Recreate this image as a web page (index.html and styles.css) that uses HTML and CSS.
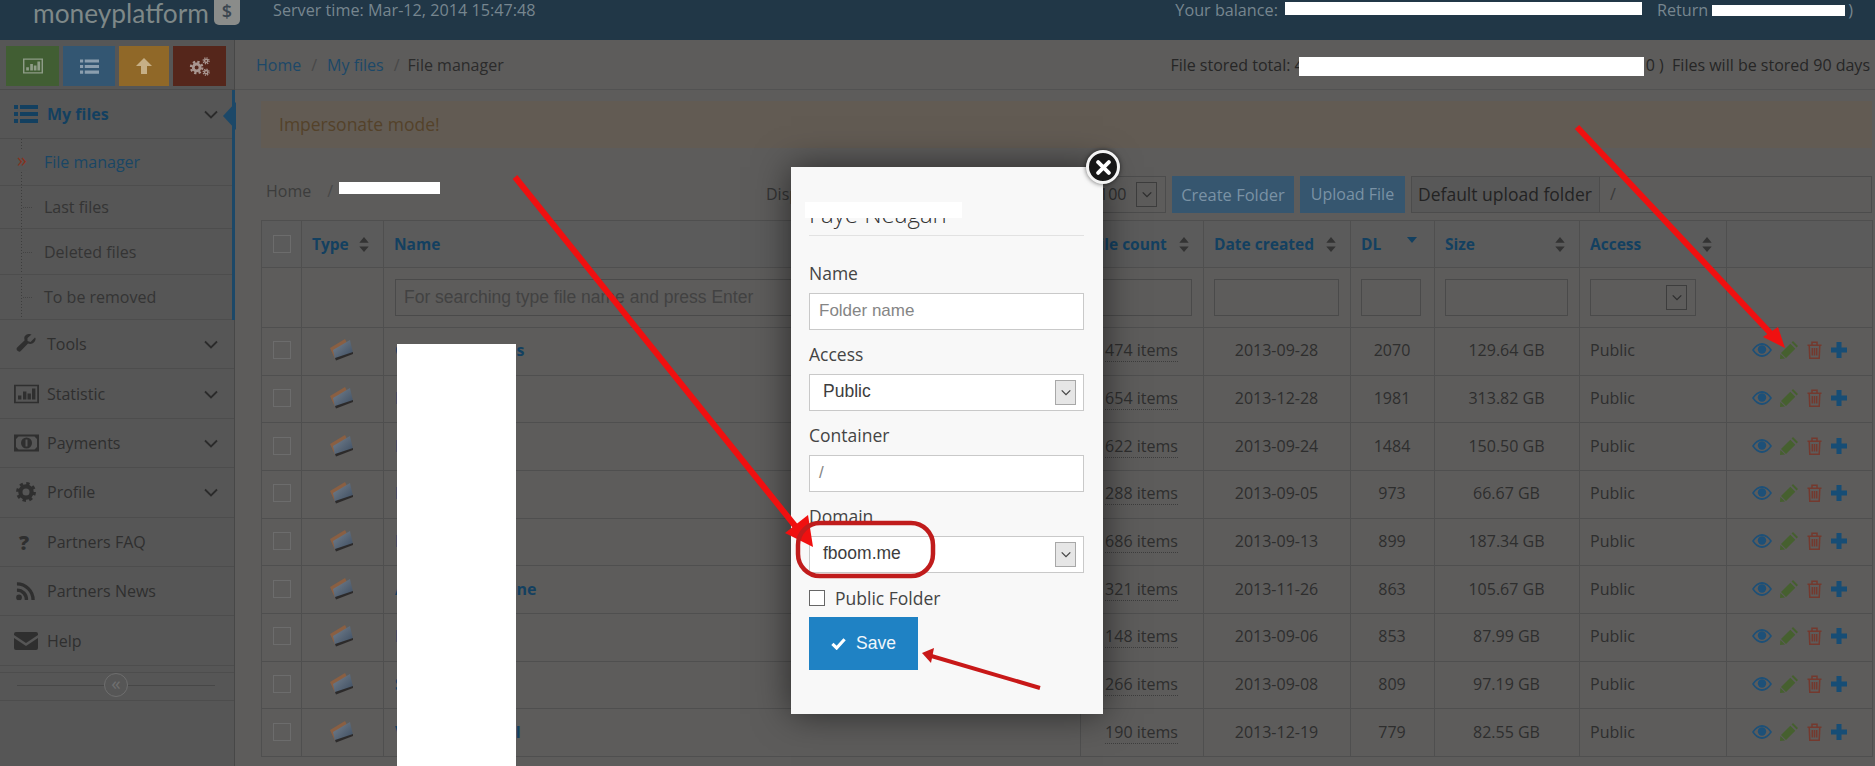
FILE: index.html
```html
<!DOCTYPE html>
<html lang="en">
<head>
<meta charset="utf-8">
<title>File manager</title>
<link rel="stylesheet" href="styles.css">
</head>
<body>
<svg class="sprite" width="0" height="0" aria-hidden="true">
  <defs>
    <linearGradient id="fld" x1="0" y1="0" x2="1" y2="1"><stop offset="0" stop-color="#76828f"/><stop offset="1" stop-color="#3c4c60"/></linearGradient>
    <symbol id="i-list" viewBox="0 0 24 18"><path d="M0 0h4v4H0zM6 0h18v4H6zM0 7h4v4H0zM6 7h18v4H6zM0 14h4v4H0zM6 14h18v4H6z"/></symbol>
    <symbol id="i-bars" viewBox="0 0 25 19"><path fill-rule="evenodd" d="M0 0h25v19H0zM1.800 1.800v15.400h21.400V1.800z"/><path d="M4 11h3.400v4H4zM9 7h3.400v8H9zM13.500 9h3.400v6h-3.400zM18 4h3.400v11H18z"/></symbol>
    <symbol id="i-chev" viewBox="0 0 14 9"><path d="M1 1.500l6 6 6-6" fill="none" stroke="currentColor" stroke-width="1.800"/></symbol>
    <symbol id="i-wrench" viewBox="0 0 20 20"><path d="M19.600 4.600c0 3-2.400 5.400-5.400 5.400-.8 0-1.500-.2-2.200-.5L5 16.700a2.400 2.400 0 1 1-3.600-3.400l7.300-7.100c-.3-.7-.4-1.400-.4-2.200C8.300 1.500 11 0 13.500 0c.7 0 1.400.2 2 .5L11.500 4v3l3 1 4.500-4.500z"/></symbol>
    <symbol id="i-money" viewBox="0 0 25 17"><path fill-rule="evenodd" d="M0 0h25v17H0zM4.500 2L2 4.500v8L4.500 15h16l2.500-2.500v-8L20.500 2z"/><circle cx="12.500" cy="8.500" r="5.500"/><path d="M11.500 5h2v7h-2z" fill="#565656"/></symbol>
    <symbol id="i-gear" viewBox="0 0 22 22"><circle cx="11" cy="11" r="6.200" fill="none" stroke="currentColor" stroke-width="4.600"/><circle cx="11" cy="11" r="9.200" fill="none" stroke="currentColor" stroke-width="3.400" stroke-dasharray="3.600 3.630"/></symbol>
    <symbol id="i-rss" viewBox="0 0 20 20"><circle cx="3.200" cy="16.800" r="3"/><path d="M1 9a10 10 0 0 1 10 10.500M1 2.500a17 17 0 0 1 17 17" fill="none" stroke="currentColor" stroke-width="3.500"/></symbol>
    <symbol id="i-mail" viewBox="0 0 24 18"><path d="M0 2a2 2 0 0 1 2-2h20a2 2 0 0 1 2 2v1L12 11 0 3zM0 6l12 8 12-8v10a2 2 0 0 1-2 2H2a2 2 0 0 1-2-2z"/></symbol>
    <symbol id="i-sort" viewBox="0 0 10 16"><path d="M5 0l5 6H0zM5 16l-5-6h10z"/></symbol>
    <symbol id="i-folder" viewBox="0 0 24 22"><path d="M0 9L15 0l2 4-13 9 1 7z" fill="#8a5f42"/><path d="M3 11L20 1l3 13L5 20z" fill="url(#fld)"/><path d="M5 19l18-6v2L6 21.500z" fill="#2c2a2a"/></symbol>
    <symbol id="i-eye" viewBox="0 0 20 14"><path fill-rule="evenodd" d="M0 7C3 2.500 6.500 0 10 0s7 2.500 10 7c-3 4.500-6.500 7-10 7S3 11.500 0 7zM2 7c2.300 3.300 5 5 8 5s5.700-1.700 8-5c-2.300-3.300-5-5-8-5S4.300 3.700 2 7z"/><circle cx="10" cy="6.500" r="4.200"/></symbol>
    <symbol id="i-pencil" viewBox="0 0 18 18"><path d="M10.300 2.700l5 5L6 17 1 12zM11.600 1.400L13 0l5 5-1.400 1.400zM.4 13L5 17.600 0 18z"/></symbol>
    <symbol id="i-trash" viewBox="0 0 15 18"><path d="M.5 4.200h14M5 4V1.200h5V4M2.200 4.200l.6 13h9.400l.6-13M5.300 7v7.500M7.500 7v7.500M9.700 7v7.500" fill="none" stroke="currentColor" stroke-width="1.500"/></symbol>
    <symbol id="i-plus" viewBox="0 0 16 16"><path d="M5.500 0h5v5.500H16v5h-5.500V16h-5v-5.500H0v-5h5.500z"/></symbol>
  </defs>
</svg>

<div class="page">
  <header class="topbar">
    <div class="logo"><span class="logo-text">moneyplatform</span><span class="logo-badge">$</span></div>
    <div class="server-time">Server time: Mar-12, 2014 15:47:48</div>
    <div class="balance">Your balance:<span class="redact redact-bal"></span><span class="return">Return</span><span class="redact redact-ret"></span>)</div>
  </header>

  <div class="body-row">
    <aside class="sidebar">
      <div class="shortcuts">
        <a class="sc sc-green"><svg class="sc-bars"><use href="#i-bars"/></svg></a>
        <a class="sc sc-blue"><svg class="sc-list"><use href="#i-list"/></svg></a>
        <a class="sc sc-orange"><svg class="sc-up" viewBox="0 0 16 16"><path d="M8 0l8 8h-5v8H5V8H0z"/></svg></a>
        <a class="sc sc-red"><svg class="sc-gears" viewBox="0 0 22 20"><g fill="none" stroke="currentColor"><circle cx="8" cy="11" r="3.600" stroke-width="3"/><circle cx="8" cy="11" r="6" stroke-width="2.400" stroke-dasharray="2.400 2.310"/><circle cx="18" cy="4" r="1.700" stroke-width="1.600"/><circle cx="18" cy="4" r="3.100" stroke-width="1.400" stroke-dasharray="1.300 1.130"/><circle cx="18" cy="16" r="1.700" stroke-width="1.600"/><circle cx="18" cy="16" r="3.100" stroke-width="1.400" stroke-dasharray="1.300 1.130"/></g></svg></a>
      </div>
      <div class="nav-open">
        <div class="nav-item nav-active">
          <svg class="nav-ic ic-list"><use href="#i-list"/></svg><span>My files</span>
          <svg class="chev"><use href="#i-chev"/></svg>
          <i class="active-tip"></i>
        </div>
        <ul class="subnav">
          <li class="current"><b class="mark">»</b>File manager</li>
          <li><i class="dash"></i>Last files</li>
          <li><i class="dash"></i>Deleted files</li>
          <li><i class="dash"></i>To be removed</li>
        </ul>
      </div>
      <div class="nav-item"><svg class="nav-ic ic-wrench"><use href="#i-wrench"/></svg><span>Tools</span><svg class="chev"><use href="#i-chev"/></svg></div>
      <div class="nav-item"><svg class="nav-ic ic-bars"><use href="#i-bars"/></svg><span>Statistic</span><svg class="chev"><use href="#i-chev"/></svg></div>
      <div class="nav-item"><svg class="nav-ic ic-bars"><use href="#i-money"/></svg><span>Payments</span><svg class="chev"><use href="#i-chev"/></svg></div>
      <div class="nav-item"><svg class="nav-ic ic-gear"><use href="#i-gear"/></svg><span>Profile</span><svg class="chev"><use href="#i-chev"/></svg></div>
      <div class="nav-item"><b class="nav-ic ic-q">?</b><span>Partners FAQ</span></div>
      <div class="nav-item"><svg class="nav-ic ic-rss"><use href="#i-rss"/></svg><span>Partners News</span></div>
      <div class="nav-item"><svg class="nav-ic ic-mail"><use href="#i-mail"/></svg><span>Help</span></div>
      <div class="collapse"><span class="collapse-btn">«</span></div>
    </aside>

    <main class="main">
      <div class="crumbbar">
        <div class="crumbs"><a>Home</a><i>/</i><a>My files</a><i class="last-sep">/</i><span>File manager</span></div>
        <div class="stored">File stored total: 4<span class="redact redact-store"></span>0 )&nbsp; Files will be stored 90 days</div>
      </div>
      <div class="content">
        <div class="alert">Impersonate mode!</div>
        <div class="toolbar">
          <div class="path"><span>Home</span><i>/</i><span class="redact redact-path"></span></div>
          <div class="display-label">Display files per page</div>
          <div class="fake-select sel-page"><span>100</span><i class="sel-arrow"><svg class="chev-sm"><use href="#i-chev"/></svg></i></div>
          <a class="tbtn tbtn-create">Create Folder</a>
          <a class="tbtn tbtn-upload">Upload File</a>
          <div class="upload-group"><span class="ug-label">Default upload folder</span><span class="ug-value">/</span></div>
        </div>
        <table class="files">
          <colgroup><col class="c1"><col class="c2"><col class="c3"><col class="c4"><col class="c5"><col class="c6"><col class="c7"><col class="c8"><col class="c9"></colgroup>
          <thead>
            <tr class="head">
              <th><i class="cb"></i></th>
              <th><div class="th-in">Type<svg class="sort"><use href="#i-sort"/></svg></div></th>
              <th>Name</th>
              <th><div class="th-in">File count<svg class="sort"><use href="#i-sort"/></svg></div></th>
              <th><div class="th-in">Date created<svg class="sort"><use href="#i-sort"/></svg></div></th>
              <th><div class="th-in">DL<i class="sort-down"></i></div></th>
              <th><div class="th-in">Size<svg class="sort"><use href="#i-sort"/></svg></div></th>
              <th><div class="th-in">Access<svg class="sort"><use href="#i-sort"/></svg></div></th>
              <th></th>
            </tr>
            <tr class="filters">
              <td></td><td></td>
              <td><div class="flt flt-name">For searching type file name and press Enter</div></td>
              <td><div class="flt"></div></td>
              <td><div class="flt"></div></td>
              <td><div class="flt flt-dl"></div></td>
              <td><div class="flt"></div></td>
              <td><div class="flt flt-access"><i class="sel-arrow"><svg class="chev-sm"><use href="#i-chev"/></svg></i></div></td>
              <td></td>
            </tr>
          </thead>
          <tbody>
            <tr><td><i class="cb"></i></td><td class="ctr"><svg class="folder"><use href="#i-folder"/></svg></td><td class="nm">Cameras photos</td><td class="ctr"><span class="cnt">474 items</span></td><td class="ctr">2013-09-28</td><td class="ctr">2070</td><td class="ctr">129.64 GB</td><td class="acc">Public</td><td><div class="acts"><svg class="a-eye"><use href="#i-eye"/></svg><svg class="a-pen"><use href="#i-pencil"/></svg><svg class="a-del"><use href="#i-trash"/></svg><svg class="a-add"><use href="#i-plus"/></svg></div></td></tr>
            <tr><td><i class="cb"></i></td><td class="ctr"><svg class="folder"><use href="#i-folder"/></svg></td><td class="nm">Movies</td><td class="ctr"><span class="cnt">654 items</span></td><td class="ctr">2013-12-28</td><td class="ctr">1981</td><td class="ctr">313.82 GB</td><td class="acc">Public</td><td><div class="acts"><svg class="a-eye"><use href="#i-eye"/></svg><svg class="a-pen"><use href="#i-pencil"/></svg><svg class="a-del"><use href="#i-trash"/></svg><svg class="a-add"><use href="#i-plus"/></svg></div></td></tr>
            <tr><td><i class="cb"></i></td><td class="ctr"><svg class="folder"><use href="#i-folder"/></svg></td><td class="nm">Music</td><td class="ctr"><span class="cnt">622 items</span></td><td class="ctr">2013-09-24</td><td class="ctr">1484</td><td class="ctr">150.50 GB</td><td class="acc">Public</td><td><div class="acts"><svg class="a-eye"><use href="#i-eye"/></svg><svg class="a-pen"><use href="#i-pencil"/></svg><svg class="a-del"><use href="#i-trash"/></svg><svg class="a-add"><use href="#i-plus"/></svg></div></td></tr>
            <tr><td><i class="cb"></i></td><td class="ctr"><svg class="folder"><use href="#i-folder"/></svg></td><td class="nm">Books</td><td class="ctr"><span class="cnt">288 items</span></td><td class="ctr">2013-09-05</td><td class="ctr">973</td><td class="ctr">66.67 GB</td><td class="acc">Public</td><td><div class="acts"><svg class="a-eye"><use href="#i-eye"/></svg><svg class="a-pen"><use href="#i-pencil"/></svg><svg class="a-del"><use href="#i-trash"/></svg><svg class="a-add"><use href="#i-plus"/></svg></div></td></tr>
            <tr><td><i class="cb"></i></td><td class="ctr"><svg class="folder"><use href="#i-folder"/></svg></td><td class="nm">Backups</td><td class="ctr"><span class="cnt">686 items</span></td><td class="ctr">2013-09-13</td><td class="ctr">899</td><td class="ctr">187.34 GB</td><td class="acc">Public</td><td><div class="acts"><svg class="a-eye"><use href="#i-eye"/></svg><svg class="a-pen"><use href="#i-pencil"/></svg><svg class="a-del"><use href="#i-trash"/></svg><svg class="a-add"><use href="#i-plus"/></svg></div></td></tr>
            <tr><td><i class="cb"></i></td><td class="ctr"><svg class="folder"><use href="#i-folder"/></svg></td><td class="nm">Archive magazine</td><td class="ctr"><span class="cnt">321 items</span></td><td class="ctr">2013-11-26</td><td class="ctr">863</td><td class="ctr">105.67 GB</td><td class="acc">Public</td><td><div class="acts"><svg class="a-eye"><use href="#i-eye"/></svg><svg class="a-pen"><use href="#i-pencil"/></svg><svg class="a-del"><use href="#i-trash"/></svg><svg class="a-add"><use href="#i-plus"/></svg></div></td></tr>
            <tr><td><i class="cb"></i></td><td class="ctr"><svg class="folder"><use href="#i-folder"/></svg></td><td class="nm">Documents</td><td class="ctr"><span class="cnt">148 items</span></td><td class="ctr">2013-09-06</td><td class="ctr">853</td><td class="ctr">87.99 GB</td><td class="acc">Public</td><td><div class="acts"><svg class="a-eye"><use href="#i-eye"/></svg><svg class="a-pen"><use href="#i-pencil"/></svg><svg class="a-del"><use href="#i-trash"/></svg><svg class="a-add"><use href="#i-plus"/></svg></div></td></tr>
            <tr><td><i class="cb"></i></td><td class="ctr"><svg class="folder"><use href="#i-folder"/></svg></td><td class="nm">Software</td><td class="ctr"><span class="cnt">266 items</span></td><td class="ctr">2013-09-08</td><td class="ctr">809</td><td class="ctr">97.19 GB</td><td class="acc">Public</td><td><div class="acts"><svg class="a-eye"><use href="#i-eye"/></svg><svg class="a-pen"><use href="#i-pencil"/></svg><svg class="a-del"><use href="#i-trash"/></svg><svg class="a-add"><use href="#i-plus"/></svg></div></td></tr>
            <tr><td><i class="cb"></i></td><td class="ctr"><svg class="folder"><use href="#i-folder"/></svg></td><td class="nm">Various tutorial</td><td class="ctr"><span class="cnt">190 items</span></td><td class="ctr">2013-12-19</td><td class="ctr">779</td><td class="ctr">82.55 GB</td><td class="acc">Public</td><td><div class="acts"><svg class="a-eye"><use href="#i-eye"/></svg><svg class="a-pen"><use href="#i-pencil"/></svg><svg class="a-del"><use href="#i-trash"/></svg><svg class="a-add"><use href="#i-plus"/></svg></div></td></tr>
          </tbody>
        </table>
      </div>
    </main>
  </div>

  <div class="name-cover"></div>

  <section class="modal">
    <div class="modal-close"><svg viewBox="0 0 14 14"><path d="M2 2l10 10M12 2L2 12" stroke="#fff" stroke-width="3.600" stroke-linecap="round"/></svg></div>
    <h2 class="modal-title">Faye Neagan<span class="title-cover"></span></h2>
    <div class="field"><label>Name</label><div class="m-input ph">Folder name</div></div>
    <div class="field"><label>Access</label><div class="m-input m-select">Public<i class="sel-arrow"><svg class="chev-sm"><use href="#i-chev"/></svg></i></div></div>
    <div class="field"><label>Container</label><div class="m-input ph ph-path">/</div></div>
    <div class="field"><label>Domain</label><div class="m-input m-select">fboom.me<i class="sel-arrow"><svg class="chev-sm"><use href="#i-chev"/></svg></i></div></div>
    <div class="check-row"><i class="m-check"></i><span>Public Folder</span></div>
    <a class="save"><svg viewBox="0 0 16 13"><path d="M1.500 7l4.500 4.300L14.500 2" fill="none" stroke="#fff" stroke-width="3.400"/></svg>Save</a>
  </section>

  <svg class="notes" viewBox="0 0 1875 766" aria-hidden="true">
    <path d="M515 177L800 532" stroke="#f01010" stroke-width="6" fill="none"/>
    <path d="M813 547L785 533L808 515z" fill="#f01010"/>
    <path d="M1577 127L1775 338" stroke="#f01010" stroke-width="6" fill="none"/>
    <path d="M1785 348L1763 337L1778 327z" fill="#f01010"/>
    <rect x="798" y="523" width="135" height="53" rx="22" fill="none" stroke="#c01c1c" stroke-width="4.500"/>
    <path d="M1040 688L928 655" stroke="#c81818" stroke-width="4" fill="none"/>
    <path d="M922 653L934 648L931 663z" fill="#c81818"/>
  </svg>
</div>
</body>
</html>
```
FILE: styles.css
```css
* { box-sizing: border-box; }
html, body { margin: 0; padding: 0; height: 100%; overflow: hidden; }
body { font-family: "Open Sans", "Liberation Sans", sans-serif; font-size: 16px; color: #2e2e2e; background: #5d5c5b; }
i { font-style: normal; }
ul { list-style: none; margin: 0; padding: 0; }
svg { fill: currentColor; }
.sprite { position: absolute; }
.page { position: relative; width: 1875px; height: 766px; overflow: hidden; }

.redact { display: inline-block; background: #fff; vertical-align: middle; }

/* header */
.topbar { height: 40px; background: #213747; color: #77868f; display: flex; align-items: flex-start; padding-left: 33px; font-size: 16.200px; line-height: 20px; }
.logo { display: flex; align-items: flex-start; margin-top: -6px; width: 240px; flex: none; }
.logo-text { font-family: Lato, "Open Sans", sans-serif; font-weight: 400; font-size: 26.300px; line-height: 38px; color: #7e8888; }
.logo-badge { margin: 0 0 0 5px; width: 26px; height: 31px; border-radius: 5px; background: #8a8c8a; color: #3a4650; font-size: 18px; line-height: 34px; text-align: center; font-weight: 600; }
.server-time { white-space: nowrap; }
.balance { margin-left: auto; padding-right: 22px; white-space: nowrap; display: flex; align-items: flex-start; }
.redact-bal { width: 357px; height: 13px; margin: 2px 0 0 7px; }
.return { margin-left: 15px; }
.redact-ret { width: 133px; height: 11px; margin: 5px 3px 0 4px; }

/* sidebar */
.body-row { display: flex; height: 726px; }
.sidebar { width: 235px; flex: none; background: #565656; border-right: 1px solid #474747; }
.shortcuts { height: 50px; padding: 6px 0 0 6px; display: flex; gap: 4px; border-bottom: 1px solid #4b4b4b; }
.sc { height: 40px; display: flex; align-items: center; justify-content: center; }
.sc-green { width: 53px; background: #415e33; color: #8e9c87; }
.sc-blue { width: 52px; background: #335672; color: #8b9eae; }
.sc-orange { width: 50px; background: #906828; color: #c6af86; }
.sc-red { width: 53px; background: #55261b; color: #a99690; }
.sc-bars { width: 20px; height: 16px; }
.sc-list { width: 19px; height: 15px; }
.sc-up { width: 16px; height: 16px; }
.sc-gears { width: 21px; height: 19px; }

.nav-open { position: relative; }
.nav-open::after { content: ""; position: absolute; top: 0; bottom: 0; right: -1px; width: 3px; background: #1c4868; }
.nav-item { position: relative; height: 49.400px; display: flex; align-items: center; border-bottom: 1px solid #4d4d4d; color: #2f2f2f; }
.nav-item > span { margin-left: 47px; }
.nav-ic { position: absolute; left: 14px; top: 50%; transform: translateY(-50%); color: #2f2f2f; }
.nav-active { height: 49px; color: #134060; font-weight: 700; }
.nav-active .nav-ic { color: #134060; }
.ic-list { width: 24px; height: 18px; }
.ic-wrench { width: 20px; height: 20px; left: 16px; }
.ic-bars { width: 25px; height: 19px; }
.ic-gear { width: 20px; height: 20px; left: 16px; }
.ic-q { left: 19px; font-size: 20px; font-weight: 800; }
.ic-rss { width: 19px; height: 19px; left: 16px; }
.ic-mail { width: 24px; height: 18px; }
.chev { position: absolute; right: 16px; top: 50%; width: 14px; height: 9px; margin-top: -4px; color: #2b2b2b; }
.active-tip { position: absolute; right: -2px; top: 12px; width: 0; height: 0; border: solid transparent; border-width: 14px 13px 14px 0; border-right-color: #1c4868; }

.subnav { display: grid; grid-template-rows: 47px 43px 46px 45px; background-image: linear-gradient(#3d3d3d 50%, transparent 50%); background-size: 1px 3px; background-repeat: repeat-y; background-position: 21px 0; }
.subnav li { position: relative; display: flex; align-items: center; padding-left: 44px; border-bottom: 1px solid #4d4d4d; color: #343434; }
.subnav .current { color: #194665; }
.mark { position: absolute; left: 17px; top: 50%; transform: translateY(-58%); color: #86331f; font-size: 20px; font-weight: 400; line-height: 1; background: #565656; }
.dash { position: absolute; left: 23px; top: 50%; width: 9px; border-top: 1px dotted #444; }

.collapse { position: relative; height: 29px; margin-top: 6px; border-top: 1px solid #4d4d4d; border-bottom: 1px solid #4d4d4d; }
.collapse::before { content: ""; position: absolute; left: 17px; right: 19px; top: 12px; border-top: 1px solid #474747; }
.collapse-btn { position: absolute; left: 104px; top: 0; width: 24px; height: 24px; border: 1px solid #6e6e6e; border-radius: 50%; background: #565656; color: #6f6f6f; font-size: 19px; line-height: 19px; text-align: center; }

/* main */
.main { flex: 1; min-width: 0; }
.crumbbar { height: 50px; display: flex; align-items: center; justify-content: space-between; padding: 0 5px 0 21px; border-bottom: 1px solid #525252; white-space: nowrap; }
.crumbs a { color: #1c4868; }
.crumbs i { margin: 0 10px; color: #484848; }
.crumbs .last-sep { margin-right: 8px; }
.crumbs span { color: #2b2b2b; }
.stored { color: #262626; display: flex; align-items: center; }
.redact-store { width: 345px; height: 19px; margin: 4px 2px 0 -5px; }
.content { padding: 11px 3px 0 26px; }
.alert { height: 47px; line-height: 47px; padding-left: 18px; background: #625b53; color: #54422a; font-size: 17.500px; }

.toolbar { margin-top: 28px; height: 37px; display: flex; gap: 6px; align-items: stretch; }
.path { flex: 1; display: flex; align-items: center; padding: 0 0 7px 5px; color: #3c3c3c; }
.path i { margin: 0 0 0 16px; color: #484848; }
.redact-path { width: 101px; height: 12px; margin: -6px 0 0 6px; }
.display-label { width: 286px; line-height: 37px; color: #333; white-space: nowrap; overflow: hidden; }
.fake-select { position: relative; border: 1px solid #4c4c4c; }
.sel-page { width: 108px; line-height: 35px; padding-left: 40px; color: #2e2e2e; }
.sel-arrow { position: absolute; top: 5px; right: 8px; width: 21px; height: 25px; border: 1px solid #3d3d3d; display: flex; align-items: center; justify-content: center; color: #2e2e2e; }
.chev-sm { width: 10px; height: 7px; }
.tbtn { display: block; line-height: 37px; background: #36566f; color: #7a92a5; text-align: center; }
.tbtn-create { width: 122px; font-size: 16.500px; }
.tbtn-upload { width: 105px; }
.upload-group { width: 461px; flex: none; display: flex; border: 1px solid #4c4c4c; line-height: 35px; }
.ug-label { padding: 0 6px; width: 188px; background: #585858; border-right: 1px solid #4c4c4c; color: #232323; white-space: nowrap; font-size: 17.500px; }
.ug-value { padding-left: 10px; color: #3a3a3a; }

/* table */
.files { margin-top: 7px; width: 1611px; table-layout: fixed; border-collapse: collapse; font-size: 16px; color: #2e2e2e; }
.c1 { width: 40px; } .c2 { width: 82px; } .c3 { width: 697px; } .c4 { width: 123px; } .c5 { width: 147px; }
.c6 { width: 84px; } .c7 { width: 145px; } .c8 { width: 147px; } .c9 { width: 146px; }
.files th, .files td { border: 1px solid #4f4f4f; padding: 0 11px 0 10px; }
.files tbody td { padding-bottom: 2px; }
.head { height: 47px; }
.head th { background: #5b5b5b; color: #134060; font-weight: 700; font-size: 15.500px; text-align: left; white-space: nowrap; }
.th-in { display: flex; align-items: center; justify-content: space-between; padding-right: 3px; }
.sort { width: 10px; height: 15px; color: #333; flex: none; }
.sort-down { width: 0; height: 0; border: 5px solid transparent; border-top: 6px solid #134060; border-bottom: 0; margin: -8px 3px 0 0; }
.cb { display: block; width: 18px; height: 18px; margin-left: 1px; border: 1px solid #6c6c6c; }
.filters { height: 60px; }
.flt { height: 37px; border: 1px solid #4a4a4a; position: relative; }
.flt-name { margin-left: 1px; font-family: "Liberation Sans", Arial, sans-serif; font-size: 17.500px; color: #424242; line-height: 35px; padding-left: 8px; white-space: nowrap; overflow: hidden; }
.flt-dl { width: 60px; }
.flt-access { width: 106px; }
.files tbody tr { height: 47.670px; }
.ctr { text-align: center; }
.folder { display: block; width: 24px; height: 22px; margin: 0 auto; }
.nm { color: #134060; font-weight: 700; white-space: nowrap; overflow: visible; }
.files .nm { padding-left: 11px; }
.cnt { border-bottom: 1px dotted #3d3d3d; }
.acc { color: #2e2e2e; }
.acts { display: flex; align-items: center; padding-left: 15px; }
.a-eye { width: 20px; height: 14px; color: #1d5078; }
.a-pen { width: 18px; height: 18px; margin-left: 8px; color: #46602f; }
.a-del { width: 15px; height: 18px; margin-left: 9px; color: #74392e; }
.a-add { width: 16px; height: 16px; margin-left: 9px; color: #174d75; }

.name-cover { position: absolute; left: 397px; top: 344px; width: 119px; height: 422px; background: #fff; }

/* modal */
.modal { position: absolute; left: 791px; top: 167px; width: 312px; height: 547px; padding: 30px 19px 0 18px; background: #f8f8f8; box-shadow: 0 0 34px rgba(0,0,0,.55); color: #444; }
.modal-close { position: absolute; right: -17px; top: -17px; width: 34px; height: 34px; border-radius: 50%; background: #171717; border: 3px solid #f4f4f4; box-shadow: 0 0 5px rgba(0,0,0,.6); display: flex; align-items: center; justify-content: center; }
.modal-close svg { width: 15px; height: 15px; }
.modal-title { position: relative; margin: 0 0 27px; height: 39px; border-bottom: 1px solid #e2e2e2; font-size: 24px; font-weight: 300; line-height: 34px; color: #333; }
.title-cover { position: absolute; left: -4px; top: 5px; width: 157px; height: 16px; background: #fff; }
.field { margin-bottom: 14px; }
.field label { display: block; height: 22px; margin-bottom: 8px; line-height: 20px; font-size: 17.500px; color: #444; }
.m-input { position: relative; height: 37px; border: 1px solid #c9c9c9; background: #fff; font-family: "Liberation Sans", Arial, sans-serif; font-size: 17.500px; line-height: 33px; padding-left: 13px; color: #3d3d3d; }
.ph { color: #858585; padding-left: 9px; font-size: 17px; }
.m-select .sel-arrow { top: 5px; right: 7px; background: #e6e6e6; border-color: #a8a8a8; color: #444; }
.check-row { display: flex; align-items: center; gap: 10px; margin-top: 17px; height: 16px; font-size: 17.500px; color: #444; }
.m-check { width: 16px; height: 16px; border: 1px solid #666; background: #fff; flex: none; }
.save { margin-top: 11px; width: 109px; height: 53px; background: #1f82c4; color: #f0f6fb; display: flex; align-items: center; justify-content: center; gap: 10px; font-family: "Liberation Sans", Arial, sans-serif; font-size: 17.500px; }
.save svg { width: 15px; height: 13px; }

.notes { position: absolute; inset: 0; width: 1875px; height: 766px; pointer-events: none; }
```
